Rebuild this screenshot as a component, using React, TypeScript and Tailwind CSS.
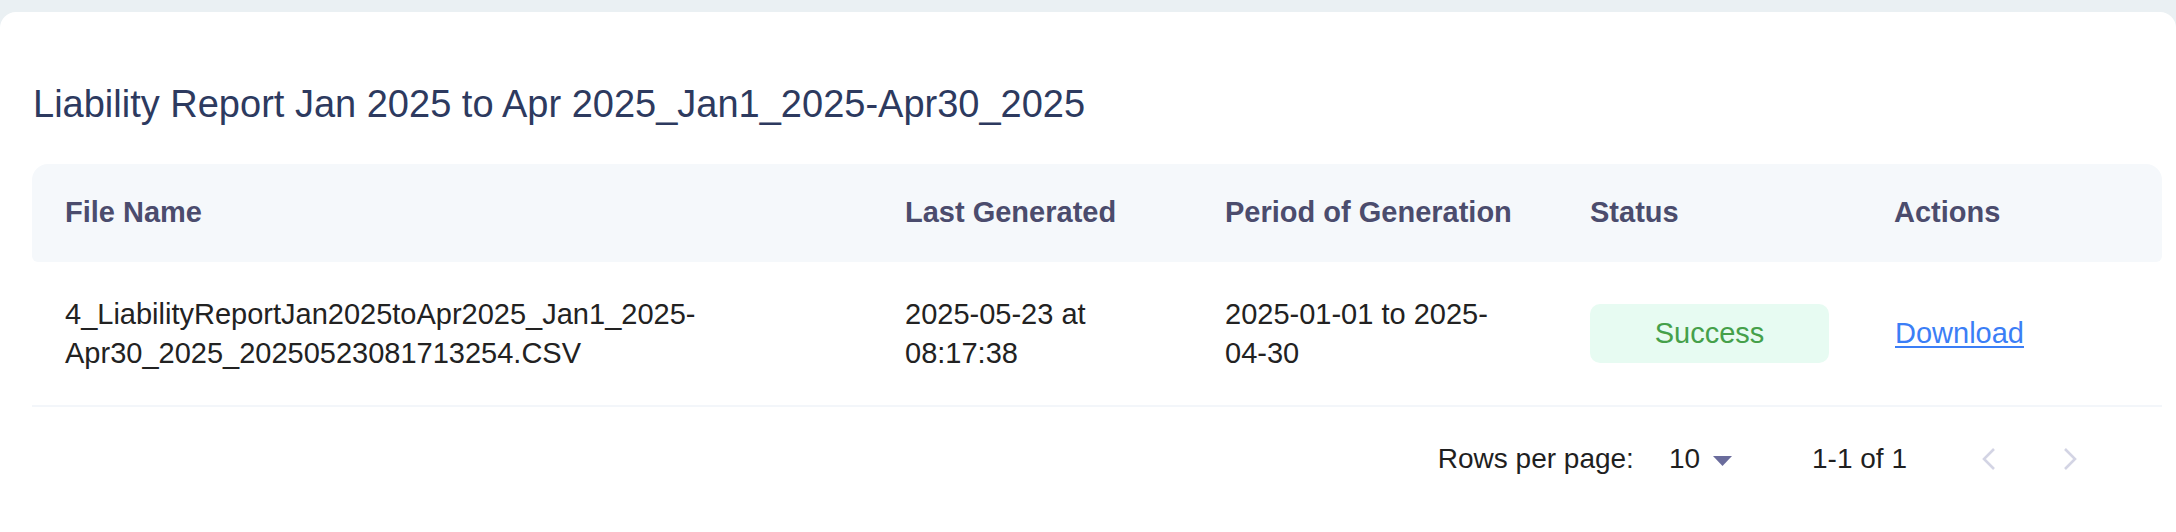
const font = { fontFamily: '"Liberation Sans", Arial, sans-serif' };

function ChevronLeft() {
  return (
    <svg width="16" height="24" viewBox="0 0 16 24" fill="none">
      <polyline points="13,2 3,12 13,22" stroke="#d3d4e4" strokeWidth="2.6" strokeLinejoin="miter" />
    </svg>
  );
}

function ChevronRight() {
  return (
    <svg width="16" height="24" viewBox="0 0 16 24" fill="none">
      <polyline points="3,2 13,12 3,22" stroke="#d3d4e4" strokeWidth="2.6" strokeLinejoin="miter" />
    </svg>
  );
}

const cols = "grid grid-cols-[840px_320px_365px_304px_1fr]";

export default function App() {
  return (
    <div className="min-h-[532px] bg-[#eaf0f3] pt-[12px]" style={font}>
      <div className="min-h-[520px] rounded-t-[16px] bg-white pl-[32px] pr-[14px]">
        <h1 className="pl-px pt-[69px] text-[38px] leading-[46px] font-normal text-[#2d3a5f]">
          Liability Report Jan 2025 to Apr 2025_Jan1_2025-Apr30_2025
        </h1>

        <div className="mt-[37px]">
          <div className={`${cols} h-[98px] items-center rounded-t-[16px] rounded-b-[6px] bg-[#f5f8fb] text-[29px] font-bold text-[#4b4c6d]`}>
            <div className="pl-[33px] pr-[32px]">File Name</div>
            <div className="pl-[33px] pr-[32px]">Last Generated</div>
            <div className="pl-[33px] pr-[32px]">Period of Generation</div>
            <div className="pl-[33px] pr-[32px]">Status</div>
            <div className="pl-[33px] pr-[32px]">Actions</div>
          </div>

          <div className={`${cols} h-[145px] items-center border-b-2 border-[#f3f6fa] text-[29px] leading-[39px] text-[#222222]`}>
            <div className="pl-[33px] pr-[32px]">
              4_LiabilityReportJan2025toApr2025_Jan1_2025-Apr30_2025_20250523081713254.CSV
            </div>
            <div className="pl-[33px] pr-[32px]">2025-05-23 at 08:17:38</div>
            <div className="pl-[33px] pr-[40px]">2025-01-01 to 2025-04-30</div>
            <div className="pl-[33px]">
              <div className="flex h-[59px] w-[239px] items-center justify-center rounded-[10px] bg-[#e7fbf2] text-[#45a04a]">
                Success
              </div>
            </div>
            <div className="pl-[34px]">
              <a href="#" className="text-[#3b7ef6] underline decoration-2 underline-offset-[3px]">
                Download
              </a>
            </div>
          </div>

          <div className="flex h-[104px] items-center justify-end pr-[84px] text-[28px] text-[#1f1f1f]">
            <span>Rows per page:</span>
            <div className="ml-[35px] flex items-center">
              <span>10</span>
              <svg className="ml-[13px] mt-[4px]" width="19" height="10" viewBox="0 0 19 10">
                <polygon points="0,0 19,0 9.5,10" fill="#6a6c9c" />
              </svg>
            </div>
            <span className="ml-[80px]">1-1 of 1</span>
            <div className="ml-[74px] flex items-center">
              <ChevronLeft />
            </div>
            <div className="ml-[65px] flex items-center">
              <ChevronRight />
            </div>
          </div>
        </div>
      </div>
    </div>
  );
}
